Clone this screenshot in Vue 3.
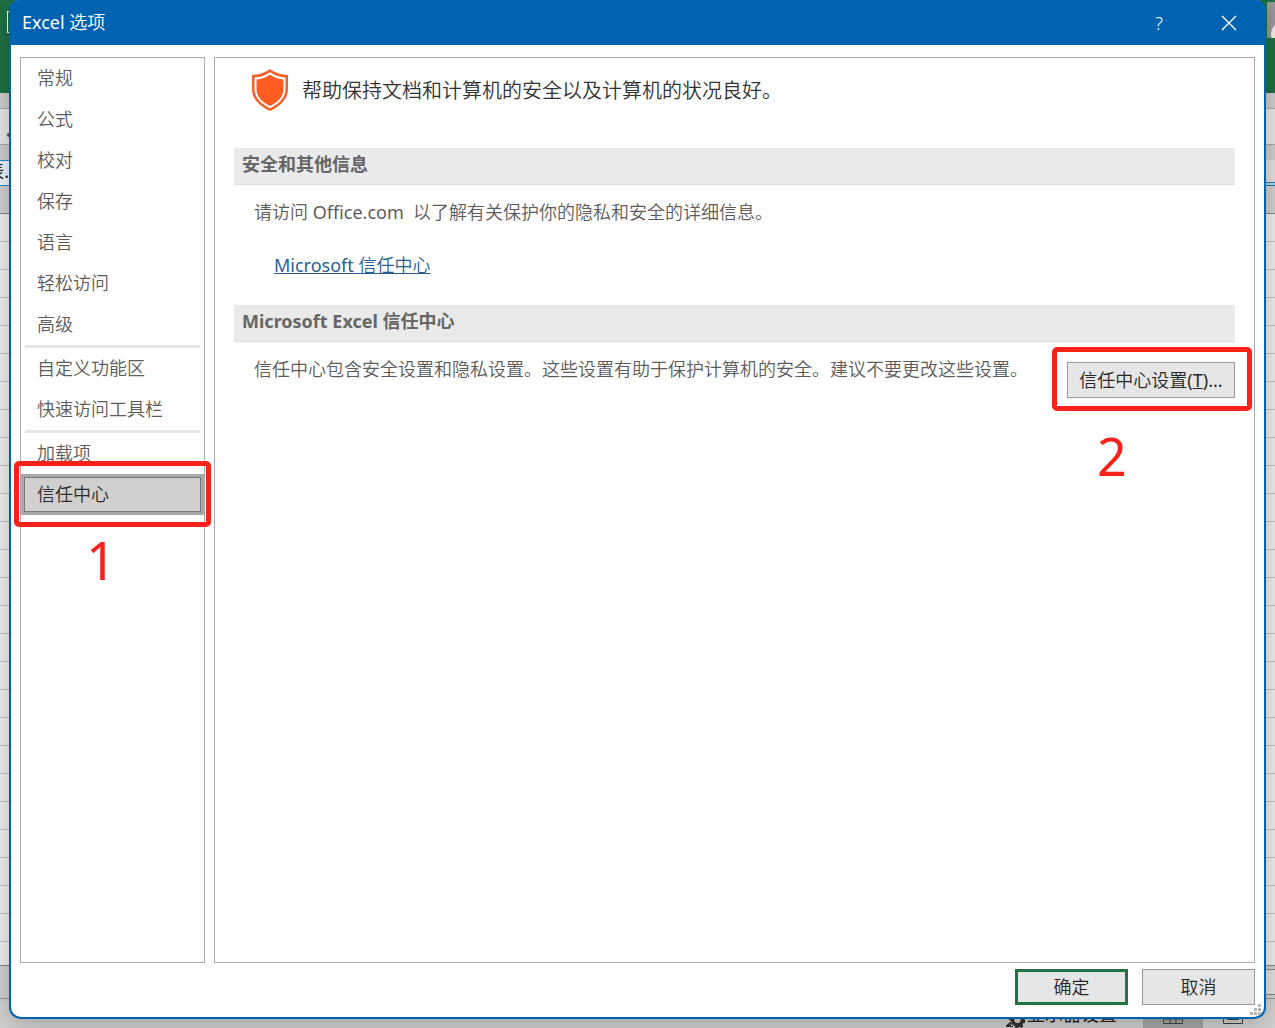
<template>
  <div class="desktop">
    <div class="workbook">
      <div class="wb-title">
        <span class="wb-save"></span>
        <span class="wb-avatar"><i></i></span>
      </div>
      <div class="wb-tabs"></div>
      <div class="wb-toolbar"><span class="wb-dot"></span></div>
      <div class="wb-gap"></div>
      <div class="wb-sheet-tab">
        <span class="wb-sheet-name">表.</span>
        <span class="wb-sheet-line"></span>
      </div>
      <div class="wb-columns"></div>
      <div class="wb-rows"></div>
      <div class="wb-scroll"><span class="wb-scroll-bar"></span></div>
      <div class="wb-status">
        <svg class="wb-gear" viewBox="0 0 20 20">
          <path d="M1 19h7v-2.500H5L7 14H5l-4 3.500zM11 3h3l.4 2.500 2 .8 1.800-1.300 1.600 2-1.400 1.800.4 2 1.200 1v3l-2 .4-.6 1.600 1 1.800-2 1.400-1.600-1.200-1 .2-.6 1h-3l-.4-2-1.400-.8-1.800 1-1.600-2 1.400-1.800-.4-1.600L4 12V9l2-.4.6-1.600-1-1.800 2-1.400L9.200 5l1.400-.4zM12.500 8.500a3.200 3.200 0 1 0 0 6.400 3.200 3.200 0 0 0 0-6.400z" fill-rule="evenodd" />
        </svg>
        <span class="wb-display">显示器设置</span>
        <span class="wb-view active">
          <svg viewBox="0 0 20 20"><path d="M.5.5h19v19H.500zM.5 7h19M.5 15h19M7 .5v19M13 .5v19" /></svg>
        </span>
        <span class="wb-view">
          <svg viewBox="0 0 20 20"><path d="M.5.5h19v19H.500zM4.500 4.500h11v11h-11zM7 8.500h6M7 12h6" /></svg>
        </span>
      </div>
    </div>

    <div class="dialog" role="dialog" aria-labelledby="dialog-title">
      <header class="title-bar">
        <h1 id="dialog-title" class="title"><span class="latin">Excel </span>选项</h1>
        <button class="title-btn" aria-label="帮助">?</button>
        <button class="title-btn" aria-label="关闭">
          <svg class="close-icon" viewBox="0 0 16 16"><path d="M1 1l14 14M15 1L1 15" /></svg>
        </button>
      </header>

      <main class="content">
        <nav class="sidebar">
          <div v-for="(group, i) in groups" :key="i" class="nav-group">
            <div v-for="item in group" :key="item" class="nav-row">
              <button class="nav-item" :class="{ active: item === current }" @click="current = item">
                {{ item }}
              </button>
              <div v-if="item === '信任中心'" class="mark mark-nav">
                <span class="mark-num">1</span>
              </div>
            </div>
          </div>
        </nav>

        <section class="panel">
          <div class="intro">
            <svg class="shield" viewBox="0 0 38 42">
              <path d="M19 0C14 4 8 5.500 1 6v14c0 10 8 17.500 18 22 10-4.500 18-12 18-22V6C30 5.500 24 4 19 0z" fill="#f5602a" />
              <path d="M19 3.200C14 6.500 9 8 3.500 8.400V20c0 8.500 6.500 15 15.500 19.200C28 35 34.500 28.500 34.500 20V8.400C29 8 24 6.500 19 3.200z" fill="#fff" />
              <path d="M19 5.400C15 8.300 10.500 9.900 5.500 10.400V20c0 7.500 5.500 13.200 13.500 17 8-3.800 13.500-9.500 13.500-17v-9.600C27.500 9.900 23 8.300 19 5.400z" fill="#ff5c22" />
            </svg>
            <p class="intro-text">帮助保持文档和计算机的安全以及计算机的状况良好。</p>
          </div>

          <h2 class="section-title">安全和其他信息</h2>
          <div class="section-body">
            <p class="text">请访问<span class="latin"> Office.com&nbsp; </span>以了解有关保护你的隐私和安全的详细信息。</p>
            <a class="link" href="#"><span class="latin">Microsoft </span>信任中心</a>
          </div>

          <h2 class="section-title">Microsoft Excel 信任中心</h2>
          <div class="section-body section-row">
            <p class="text">信任中心包含安全设置和隐私设置。这些设置有助于保护计算机的安全。建议不要更改这些设置。</p>
            <div class="setting">
              <button class="btn setting-btn">信任中心设置<span class="latin">(<u>T</u>)...</span></button>
              <div class="mark mark-setting">
                <span class="mark-num">2</span>
              </div>
            </div>
          </div>
        </section>
      </main>

      <footer class="footer">
        <button class="btn footer-btn primary">确定</button>
        <button class="btn footer-btn">取消</button>
      </footer>
      <svg class="grip" viewBox="0 0 12 12">
        <path d="M8 0h3v3H8zM4 4h3v3H4zM8 4h3v3H8zM0 8h3v3H0zM4 8h3v3H4zM8 8h3v3H8z" />
      </svg>
    </div>
  </div>
</template>

<script setup>
import { ref } from 'vue'

const groups = [
  ['常规', '公式', '校对', '保存', '语言', '轻松访问', '高级'],
  ['自定义功能区', '快速访问工具栏'],
  ['加载项', '信任中心']
]

const current = ref('信任中心')
</script>

<style>
body {
  margin: 0;
  background: #d4d4d4;
}
</style>

<style scoped>
.desktop {
  position: relative;
  display: flex;
  min-height: 100vh;
  box-sizing: border-box;
  padding: 0 9px 9px;
  overflow: hidden;
  font-family: "Noto Sans", "Noto Sans CJK SC", sans-serif;
  font-size: 18px;
  font-weight: 350;
  line-height: 24px;
  color: #5c5c5c;
}
h1, h2, p {
  margin: 0;
}
button {
  font: inherit;
  cursor: pointer;
}
.latin {
  font-weight: 400;
}

/* 背后的工作簿窗口 */
.workbook {
  position: absolute;
  inset: 0;
  display: flex;
  flex-direction: column;
}
.wb-title {
  height: 93px;
  display: flex;
  justify-content: space-between;
  background: #1e7145;
}
.wb-save {
  width: 20px;
  height: 20px;
  margin: 11px 0 0 7px;
  border: 1px solid #fff;
}
.wb-avatar {
  width: 8px;
  height: 36px;
  margin-top: 2px;
  background: #999;
  overflow: hidden;
}
.wb-avatar i {
  display: block;
  width: 24px;
  height: 24px;
  margin: 20px 0 0 4px;
  border-radius: 50%;
  background: #f0f0f0;
}
.wb-tabs {
  height: 15px;
  background: #cfcfcf;
  border-bottom: 1px solid #aaa;
}
.wb-toolbar {
  height: 35px;
  display: flex;
  align-items: center;
  background: #e9e9e9;
  border-bottom: 1px solid #aaa;
}
.wb-dot {
  width: 4px;
  height: 4px;
  margin: 16px 0 0 7px;
  border-radius: 50%;
  background: #456;
}
.wb-gap {
  height: 15px;
  background: #d0d0d0;
}
.wb-sheet-tab {
  height: 26px;
  display: flex;
  justify-content: space-between;
  background: #e2e2e2;
}
.wb-sheet-name {
  width: 9px;
  display: flex;
  justify-content: flex-end;
  overflow: hidden;
  color: #222;
  font-weight: 400;
  line-height: 20px;
  white-space: nowrap;
  background: #f0f8fd;
  border-top: 1px solid #2b8acb;
  border-bottom: 1px solid #2b8acb;
}
.wb-sheet-line {
  align-self: flex-end;
  width: 9px;
  height: 2px;
  background: #9fdcff;
  border-top: 1px solid #2878b0;
  border-bottom: 1px solid #2878b0;
}
.wb-columns {
  height: 27px;
  background: #d2d2d2;
  border-bottom: 1px solid #888;
}
.wb-rows {
  flex: 1;
  background: repeating-linear-gradient(#f0f0f0 0 27px, #c2c2c2 27px 28px);
}
.wb-scroll {
  height: 32px;
  display: flex;
  justify-content: flex-end;
  align-items: center;
  background: #d2d2d2;
  border-top: 1px solid #858585;
  border-bottom: 1px solid #999;
}
.wb-scroll-bar {
  width: 9px;
  height: 24px;
  background: #e2e2e2;
  border-top: 1px solid #858585;
  border-bottom: 1px solid #858585;
}
.wb-status {
  height: 29px;
  display: flex;
  justify-content: flex-end;
  align-items: center;
  padding-right: 12px;
  background: #d2d2d2;
  color: #222;
  font-weight: 400;
}
.wb-gear {
  align-self: flex-end;
  width: 20px;
  height: 20px;
  margin-right: 2px;
  fill: #333;
}
.wb-display {
  margin-right: 26px;
}
.wb-view {
  width: 60px;
  height: 29px;
  display: flex;
  align-items: center;
  justify-content: center;
}
.wb-view.active {
  background: #a8a8a8;
}
.wb-view svg {
  width: 20px;
  height: 20px;
  fill: none;
  stroke: #444;
}

/* 选项对话框 */
.dialog {
  position: relative;
  flex: 1;
  min-width: 0;
  display: flex;
  flex-direction: column;
  background: #fff;
  border: 2px solid #0063b1;
  border-top: none;
  border-radius: 10px 10px 12px 12px;
  box-shadow: 0 4px 24px rgba(0, 0, 0, 0.25);
}
.title-bar {
  height: 45px;
  display: flex;
  align-items: center;
  background: #0063b1;
  border-radius: 8px 8px 0 0;
  color: #fff;
}
.title {
  flex: 1;
  padding: 0 0 2px 11px;
  font-size: 18px;
  font-weight: 350;
}
.title-btn {
  width: 70px;
  height: 45px;
  padding: 0;
  display: flex;
  align-items: center;
  justify-content: center;
  background: none;
  border: none;
  color: #fff;
}
.close-icon {
  width: 16px;
  height: 16px;
  fill: none;
  stroke: #fff;
  stroke-width: 1.4;
}
.content {
  flex: 1;
  display: flex;
  gap: 9px;
  padding: 12px 9px 6px;
}
.sidebar {
  flex: none;
  width: 183px;
  border: 1px solid #ababab;
}
.nav-group + .nav-group::before {
  content: "";
  display: block;
  height: 3px;
  margin: 0 4px;
  background: #e6e6e6;
}
.nav-row {
  position: relative;
}
.nav-item {
  display: block;
  width: 100%;
  height: 41px;
  padding: 0 16px 1px;
  background: none;
  border: none;
  color: #5c5c5c;
  text-align: left;
}
.nav-item.active {
  padding: 0 13px 1px;
  background: #d1d0cf;
  border: 3px solid #a9a9a9;
  outline: 1px solid #777;
  outline-offset: -4px;
  color: #2b2b2b;
}
.panel {
  flex: 1;
  min-width: 0;
  padding: 0 19px;
  border: 1px solid #ababab;
}
.intro {
  display: flex;
  align-items: center;
  gap: 13px;
  height: 64px;
  padding: 0 17px 26px;
}
.shield {
  flex: none;
  width: 38px;
  height: 42px;
}
.intro-text {
  padding-top: 2px;
  font-size: 20px;
  color: #333;
}
.section-title {
  padding: 4px 8px 8px;
  background: #eaeaea;
  border-bottom: 1px solid #dedede;
  font-size: 18px;
  font-weight: 700;
  color: #666;
}
.section-body {
  padding: 15px 0 28px 20px;
}
.text {
  color: #5c5c5c;
}
.link {
  display: inline-block;
  margin: 29px 0 0 20px;
  color: #2b5f94;
}
.section-row {
  display: flex;
  justify-content: space-between;
}
.setting {
  position: relative;
  flex: none;
  align-self: flex-start;
  margin-top: 5px;
}
.btn {
  height: 36px;
  padding: 0;
  background: #e6e6e6;
  border: 1px solid #999;
  color: #262626;
}
.setting-btn {
  display: block;
  width: 168px;
}
.footer {
  display: flex;
  justify-content: flex-end;
  gap: 14px;
  padding: 0 9px 12px;
}
.footer-btn {
  width: 113px;
}
.footer-btn.primary {
  border: 3px solid #217346;
}
.grip {
  position: absolute;
  right: 2px;
  bottom: 1px;
  width: 12px;
  height: 12px;
  fill: #b5b5b5;
}

/* 红色步骤标注 */
.mark {
  position: absolute;
  z-index: 2;
  border: 5px solid #f9221a;
  border-radius: 5px;
  pointer-events: none;
}
.mark-nav {
  inset: -13px -7px -12px;
}
.mark-setting {
  inset: -15px -17px -13px -15px;
}
.mark-num {
  position: absolute;
  top: 100%;
  left: 36%;
  margin-top: 12px;
  font-size: 52px;
  font-weight: 400;
  line-height: 52px;
  color: #f9221a;
}
.mark-setting .mark-num {
  left: 21%;
  margin-top: 24px;
}
</style>
